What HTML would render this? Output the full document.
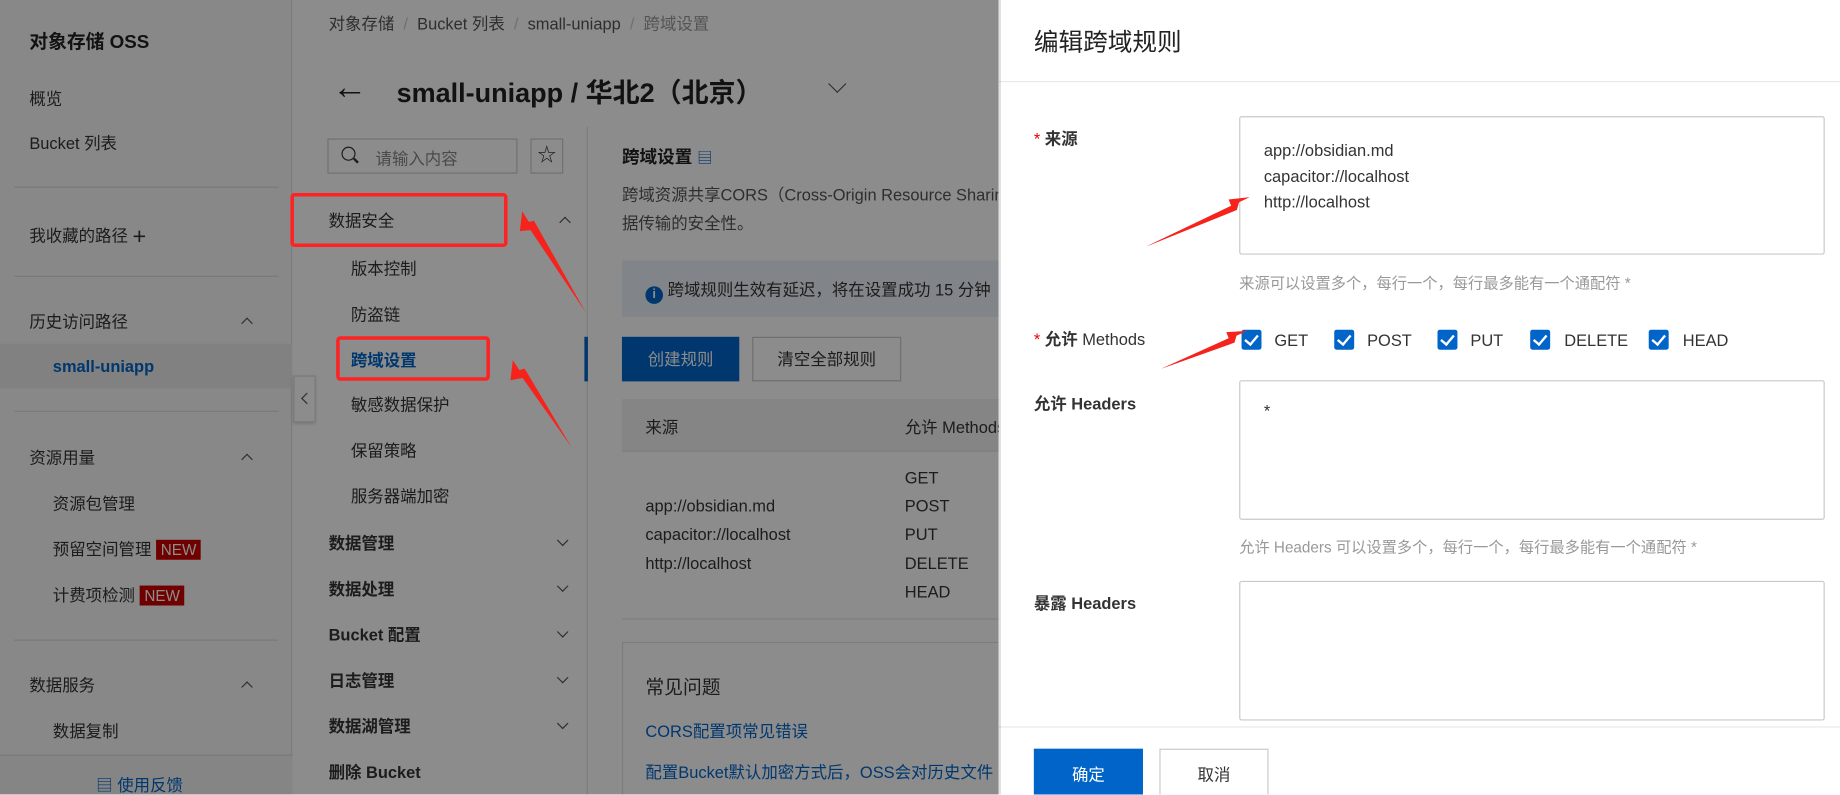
<!DOCTYPE html>
<html><head><meta charset="utf-8">
<style>
*{box-sizing:border-box;margin:0;padding:0}
html,body{width:1840px;height:795px;overflow:hidden;background:#fff}
body{font-family:"Liberation Sans","Noto Sans CJK SC",sans-serif;color:#333}
#w{position:absolute;left:0;top:0;width:1568px;height:677px;transform:scale(1.17347);transform-origin:0 0;overflow:hidden}
.a{position:absolute;white-space:nowrap}
.sb{position:absolute;left:0;top:0;width:249px;height:677px;background:#f7f7f7;border-right:1px solid #e3e3e3}
.hl{position:absolute;left:12px;width:225px;height:1px;background:#ddd}
.f14{font-size:14px}
.b{font-weight:bold}
.chev{position:absolute;width:7px;height:7px;border-left:1.3px solid #555;border-top:1.3px solid #555}
.up{transform:rotate(45deg)}
.dn{transform:rotate(225deg)}
.new{background:#c00;color:#fff;font-size:13px;padding:1px 4px;margin-left:4px}
.ov{position:absolute;left:0;top:0;width:851px;height:677px;background:rgba(0,0,0,0.45)}
.dr{position:absolute;left:851px;top:0;width:717px;height:677px;background:#fff}
.ta{position:absolute;left:205px;width:499px;border:1px solid #c9c9c9;border-radius:2px;background:#fff}
.cb{position:absolute;width:17px;height:17px;background:#0064c8;border-radius:2px}
.cb:after{content:"";position:absolute;left:5px;top:2px;width:5px;height:9px;border-right:2px solid #fff;border-bottom:2px solid #fff;transform:rotate(40deg)}
.ml{position:absolute;font-size:14px;color:#333}
</style></head><body><div id="w">
<div class="sb">
 <div class="a b" style="left:25px;top:22px;font-size:16px;color:#222">对象存储 OSS</div>
 <div class="a f14" style="left:25px;top:74px">概览</div>
 <div class="a f14" style="left:25px;top:112px">Bucket 列表</div>
 <div class="hl" style="top:159px"></div>
 <div class="a f14" style="left:25px;top:191px">我收藏的路径 <span style="font-size:20px;font-weight:300;vertical-align:-2px">+</span></div>
 <div class="hl" style="top:235px"></div>
 <div class="a f14" style="left:25px;top:264px">历史访问路径</div>
 <div class="chev up" style="left:207px;top:272px"></div>
 <div class="a" style="left:0;top:293px;width:249px;height:38px;background:#ebebeb"></div>
 <div class="a f14 b" style="left:45px;top:304px;color:#0064c8">small-uniapp</div>
 <div class="hl" style="top:350px"></div>
 <div class="a f14" style="left:25px;top:380px">资源用量</div>
 <div class="chev up" style="left:207px;top:388px"></div>
 <div class="a f14" style="left:45px;top:419px">资源包管理</div>
 <div class="a f14" style="left:45px;top:458px">预留空间管理<span class="new">NEW</span></div>
 <div class="a f14" style="left:45px;top:497px">计费项检测<span class="new">NEW</span></div>
 <div class="hl" style="top:545px"></div>
 <div class="a f14" style="left:25px;top:574px">数据服务</div>
 <div class="chev up" style="left:207px;top:582px"></div>
 <div class="a f14" style="left:45px;top:613px">数据复制</div>
 <div class="a" style="left:0;top:643px;width:249px;height:34px;background:#f2f2f2;border-top:1px solid #ddd"></div>
 <div class="a f14" style="left:82px;top:659px;color:#0064c8">▤ 使用反馈</div>
</div>
<div class="a" style="left:250px;top:320px;width:19px;height:40px;background:#fff;border:1px solid #ddd;box-shadow:0 1px 3px rgba(0,0,0,.2)"><div class="chev" style="left:7px;top:15px;transform:rotate(-45deg)"></div></div>
<div class="a f14" style="left:280px;top:10px;color:#555">对象存储 <span style="color:#ccc">&nbsp;/&nbsp;</span> Bucket 列表 <span style="color:#ccc">&nbsp;/&nbsp;</span> small-uniapp <span style="color:#ccc">&nbsp;/&nbsp;</span> <span style="color:#999">跨域设置</span></div>
<div class="a" style="left:283px;top:58px;font-size:30px;color:#222;line-height:34px">←</div>
<div class="a b" style="left:338px;top:60px;font-size:23px;color:#222">small-uniapp / 华北2（北京）</div>
<div class="chev dn" style="left:708px;top:66px;width:11px;height:11px"></div>
<div class="a" style="left:279px;top:118px;width:162px;height:30px;border:1px solid #ccc;background:#fff;font-size:14px;color:#888;padding:6px 0 0 40px">请输入内容</div>
<div class="a" style="left:291px;top:125px;width:12px;height:12px;border:1.5px solid #333;border-radius:50%"></div>
<div class="a" style="left:301px;top:136px;width:5px;height:1.5px;background:#333;transform:rotate(45deg)"></div>
<div class="a" style="left:452px;top:118px;width:28px;height:30px;border:1px solid #ccc;background:#fff;text-align:center;font-size:16px;line-height:28px">☆</div>
<div class="a f14" style="left:280px;top:178px">数据安全</div><div class="chev up" style="left:478px;top:186px"></div>
<div class="a f14" style="left:299px;top:219px">版本控制</div>
<div class="a f14" style="left:299px;top:258px">防盗链</div>
<div class="a f14 b" style="left:299px;top:297px;color:#0064c8">跨域设置</div>
<div class="a f14" style="left:299px;top:335px">敏感数据保护</div>
<div class="a f14" style="left:299px;top:374px">保留策略</div>
<div class="a f14" style="left:299px;top:413px">服务器端加密</div>
<div class="a f14 b" style="left:280px;top:453px">数据管理</div><div class="chev dn" style="left:476px;top:457px"></div>
<div class="a f14 b" style="left:280px;top:492px">数据处理</div><div class="chev dn" style="left:476px;top:496px"></div>
<div class="a f14 b" style="left:280px;top:531px">Bucket 配置</div><div class="chev dn" style="left:476px;top:535px"></div>
<div class="a f14 b" style="left:280px;top:570px">日志管理</div><div class="chev dn" style="left:476px;top:574px"></div>
<div class="a f14 b" style="left:280px;top:609px">数据湖管理</div><div class="chev dn" style="left:476px;top:613px"></div>
<div class="a f14 b" style="left:280px;top:648px">删除 Bucket</div>
<div class="a" style="left:500px;top:108px;width:1px;height:569px;background:#e3e3e3"></div>
<div class="a" style="left:498px;top:287px;width:3px;height:38px;background:#0064c8"></div>
<div class="a b" style="left:530px;top:123px;font-size:15px;color:#222">跨域设置 <span style="color:#0064c8;font-weight:normal;font-size:13px">▤</span></div>
<div class="a f14" style="left:530px;top:156px;color:#555">跨域资源共享CORS（Cross-Origin Resource Sharing</div>
<div class="a f14" style="left:530px;top:180px;color:#555">据传输的安全性。</div>
<div class="a" style="left:530px;top:222px;width:330px;height:48px;background:#ebf2fa"></div>
<div class="a f14" style="left:550px;top:237px;color:#333"><span style="display:inline-block;width:15px;height:15px;border-radius:50%;background:#0064c8;color:#fff;font-size:11px;text-align:center;line-height:15px;font-weight:bold;vertical-align:-2px">i</span> 跨域规则生效有延迟，将在设置成功 15 分钟</div>
<div class="a f14" style="left:530px;top:287px;width:100px;height:38px;background:#0064c8;color:#fff;text-align:center;line-height:38px">创建规则</div>
<div class="a f14" style="left:641px;top:287px;width:127px;height:38px;border:1px solid #c9c9c9;background:#fff;text-align:center;line-height:36px">清空全部规则</div>
<div class="a" style="left:530px;top:340px;width:330px;height:45px;background:#f2f2f2;border-bottom:1px solid #e3e3e3"></div>
<div class="a f14" style="left:550px;top:354px">来源</div>
<div class="a f14" style="left:771px;top:354px">允许 Methods</div>
<div class="a f14" style="left:771px;top:399px">GET</div>
<div class="a f14" style="left:771px;top:423px">POST</div>
<div class="a f14" style="left:771px;top:447px">PUT</div>
<div class="a f14" style="left:771px;top:472px">DELETE</div>
<div class="a f14" style="left:771px;top:496px">HEAD</div>
<div class="a f14" style="left:550px;top:423px">app://obsidian.md</div>
<div class="a f14" style="left:550px;top:447px">capacitor://localhost</div>
<div class="a f14" style="left:550px;top:472px">http://localhost</div>
<div class="a" style="left:530px;top:527px;width:330px;height:1px;background:#e3e3e3"></div>
<div class="a" style="left:530px;top:547px;width:330px;height:140px;border:1px solid #e3e3e3;background:#fff"></div>
<div class="a" style="left:550px;top:572px;font-size:16px">常见问题</div>
<div class="a f14" style="left:550px;top:613px;color:#0064c8">CORS配置项常见错误</div>
<div class="a f14" style="left:550px;top:648px;color:#0064c8">配置Bucket默认加密方式后，OSS会对历史文件</div>
<div class="ov"></div>
<div class="dr">
 <div class="a" style="left:30px;top:20px;font-size:21px;color:#222">编辑跨域规则</div>
 <div class="a" style="left:0;top:69px;width:717px;height:1px;background:#e8e8e8"></div>
 <div class="a f14 b" style="left:30px;top:108px"><span style="color:#e00;font-weight:normal">*</span> 来源</div>
 <div class="ta" style="top:99px;height:118px"></div>
 <div class="a f14" style="left:226px;top:117px;line-height:22px;color:#333">app://obsidian.md<br>capacitor://localhost<br>http://localhost</div>
 <div class="a" style="left:205px;top:231px;font-size:13px;color:#999">来源可以设置多个，每行一个，每行最多能有一个通配符 *</div>
 <div class="a f14 b" style="left:30px;top:279px"><span style="color:#e00;font-weight:normal">*</span> 允许 <span style="font-weight:normal">Methods</span></div>
 <div class="cb" style="left:207px;top:281px"></div><div class="ml" style="left:235px;top:282px">GET</div>
 <div class="cb" style="left:286px;top:281px"></div><div class="ml" style="left:314px;top:282px">POST</div>
 <div class="cb" style="left:374px;top:281px"></div><div class="ml" style="left:402px;top:282px">PUT</div>
 <div class="cb" style="left:453px;top:281px"></div><div class="ml" style="left:482px;top:282px">DELETE</div>
 <div class="cb" style="left:554px;top:281px"></div><div class="ml" style="left:583px;top:282px">HEAD</div>
 <div class="a f14 b" style="left:30px;top:334px">允许 <span>Headers</span></div>
 <div class="ta" style="top:324px;height:119px"></div>
 <div class="a f14" style="left:226px;top:342px">*</div>
 <div class="a" style="left:205px;top:456px;font-size:13px;color:#999">允许 Headers 可以设置多个，每行一个，每行最多能有一个通配符 *</div>
 <div class="a f14 b" style="left:30px;top:504px">暴露 Headers</div>
 <div class="ta" style="top:495px;height:119px"></div>
 <div class="a" style="left:0;top:619px;width:717px;height:1px;background:#e8e8e8"></div>
 <div class="a f14" style="left:30px;top:638px;width:93px;height:40px;background:#0064c8;color:#fff;text-align:center;line-height:44px">确定</div>
 <div class="a f14" style="left:137px;top:638px;width:93px;height:40px;border:1px solid #c9c9c9;text-align:center;line-height:42px">取消</div>
</div>
<div class="a" style="left:851px;top:0;width:2px;height:677px;background:rgba(0,0,0,.12)"></div>
<svg class="a" style="left:0;top:0" width="1568" height="677">
 <rect x="249" y="166" width="182" height="43" rx="2" fill="none" stroke="#f22" stroke-width="3"/>
 <rect x="288" y="288" width="128" height="35" rx="2" fill="none" stroke="#f22" stroke-width="3"/>
 <g fill="#f5231c">
  <polygon points="499,266 445,180 443,197 453,196"/>
  <polygon points="499,266 448,190 455,188"/>
  <polygon points="487,381 437,307 435,324 446,322"/>
  <polygon points="487,381 441,316 447,314"/>
  <polygon points="977,210 1065,168 1047,170 1051,180"/>
  <polygon points="977,210 1056,172 1054,179"/>
  <polygon points="990,314 1063,282 1045,283 1049,293"/>
  <polygon points="990,314 1054,285 1052,292"/>
 </g>
</svg>
</div></body></html>
